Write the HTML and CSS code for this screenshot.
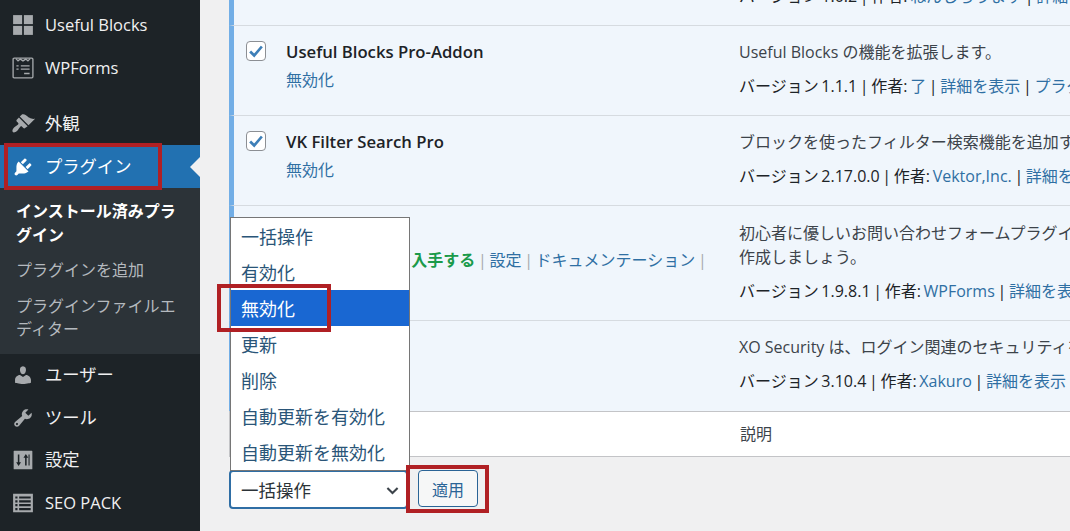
FILE: index.html
```html
<!DOCTYPE html>
<html lang="ja">
<head>
    <meta charset="UTF-8">
    <title>プラグイン</title>
    <link rel="stylesheet" href="styles.css">
</head>
<body>
<div class="page">
    <nav class="sidebar">
        <a class="menu-item">
            <svg class="menu-icon" viewBox="0 0 20 20"><rect x="1" y="1" width="8.2" height="8.2"/><rect x="10.8" y="1" width="8.2" height="8.2"/><rect x="1" y="10.8" width="8.2" height="8.2"/><rect x="10.8" y="10.8" width="8.2" height="8.2"/></svg>
            Useful Blocks
        </a>
        <a class="menu-item">
            <svg class="menu-icon" viewBox="0 0 20 20"><path class="outline" d="M2 1h16q1 0 1 1v16q0 1-1 1H2q-1 0-1-1V2q0-1 1-1z"/><path class="outline" d="M3.500 1.500l2 2 2-1.600 2.500 1.600 2.500-1.600 2 1.600 2-2"/><path class="outline" d="M4 8h2M8 8h8M4 11h2M8 11h8M11 15h5"/></svg>
            WPForms
        </a>
        <div class="menu-sep"></div>
        <a class="menu-item ja">
            <svg class="menu-icon brush" viewBox="0 0 20 20"><path d="M14.48 11.06L7.41 3.99l1.5-1.5c.5-.56 2.3-.47 3.51.32 1.21.8 1.43 1.28 2.91 2.1 1.18.64 2.45 1.26 4.45.85zM13.77 11.77L6.7 4.7 4.93 6.47c-.39.39-.39 1.02 0 1.41l1.06 1.06c.39.39.39 1.03 0 1.42-.6.6-1.43 1.11-2.21 1.69-.35.26-.7.53-1.01.84-1.34 1.34-1.7 2.9-1.05 3.6.65.65 2.25.28 3.58-1.05.31-.31.58-.66.84-1.01.58-.78 1.09-1.61 1.69-2.21.39-.39 1.03-.39 1.42 0l1.06 1.06c.39.39 1.02.39 1.41 0z"/></svg>
            外観
        </a>
        <a class="menu-item ja active">
            <svg class="menu-icon" viewBox="0 0 20 20"><path d="M13.11 4.36L9.87 7.6 8 5.73l3.24-3.24c.35-.34 1.05-.2 1.56.32.52.51.66 1.21.31 1.55zm-8 1.77l.91-1.12 9.01 9.01-1.19.84c-.71.71-2.63 1.16-3.82 1.16H6.14L4.9 17.26c-.59.59-1.54.59-2.12 0-.59-.58-.59-1.53 0-2.12l1.24-1.24v-3.88c0-1.13.4-3.19 1.09-3.89zm7.26 3.97l3.24-3.24c.34-.35 1.04-.21 1.55.31.52.51.66 1.21.31 1.55l-3.24 3.25z"/></svg>
            プラグイン
        </a>
        <div class="submenu">
            <a class="sub-item current">インストール済みプラグイン</a>
            <a class="sub-item">プラグインを追加</a>
            <a class="sub-item">プラグインファイルエディター</a>
        </div>
        <a class="menu-item ja">
            <svg class="menu-icon" viewBox="0 0 20 20"><path d="M10 9.25c-2.27 0-2.73-3.44-2.73-3.44C7 4.02 7.82 2 9.97 2c2.16 0 2.98 2.02 2.71 3.81 0 0-.41 3.44-2.68 3.44zm0 2.57L12.72 10c2.39 0 4.52 2.33 4.52 4.53v2.49s-3.65 1.13-7.24 1.13c-3.65 0-7.24-1.13-7.24-1.13v-2.49c0-2.25 1.94-4.48 4.47-4.48z"/></svg>
            ユーザー
        </a>
        <a class="menu-item ja">
            <svg class="menu-icon" viewBox="0 0 20 20"><path d="M16.68 9.77c-1.34 1.34-3.3 1.67-4.95.99l-5.41 6.52c-.99.99-2.59.99-3.58 0s-.99-2.59 0-3.57l6.52-5.42c-.68-1.65-.35-3.61.99-4.95 1.28-1.28 3.12-1.62 4.72-1.06l-2.89 2.89 2.82 2.82 2.86-2.87c.53 1.58.18 3.39-1.08 4.65zM3.81 16.21c.4.39 1.04.39 1.43 0 .4-.4.4-1.04 0-1.43-.39-.4-1.03-.4-1.43 0-.39.39-.39 1.03 0 1.43z"/></svg>
            ツール
        </a>
        <a class="menu-item ja">
            <svg class="menu-icon" viewBox="0 0 20 20"><path fill-rule="evenodd" d="M2 1.500h16q.5 0 .5.5v16q0 .5-.5.500H2q-.5 0-.5-.5V2q0-.5.5-.5zM5.300 5v7H3.800l2.200 3.500L8.200 12H6.700V5zM13.300 15v-7h1.500L12.600 4.500 10.400 8h1.500v7zM16 5h-1v10h1z"/></svg>
            設定
        </a>
        <a class="menu-item">
            <svg class="menu-icon" viewBox="0 0 20 20"><path fill-rule="evenodd" d="M1 1.500h18v17H1zM3 4v2h2V4zM6.500 4v2H17V4zM3 7.500v2h2v-2zM6.500 7.500v2H17v-2zM3 11v2h2v-2zM6.500 11v2H17v-2zM3 14.500v2h2v-2zM6.500 14.500v2H17v-2z"/></svg>
            SEO PACK
        </a>
    </nav>

    <main class="content">
        <div class="plugin-table">
            <div class="plugin-row">
                <div class="check-col"><span class="check"><svg viewBox="0 0 20 20"><path d="M3.500 10.500l4.500 4.500 8.500-10"/></svg></span></div>
                <div class="name-col"><div class="plugin-name">Useful Blocks</div><div class="actions"><a>無効化</a></div></div>
                <div class="desc-col"><p>Useful Blocks のブロックを追加します。</p><p class="meta">バージョン 1.0.2 | 作者: <a>ねんじろうます</a> | <a>詳細を表示</a></p></div>
            </div>
            <div class="plugin-row">
                <div class="check-col"><span class="check"><svg viewBox="0 0 20 20"><path d="M3.500 10.500l4.500 4.500 8.500-10"/></svg></span></div>
                <div class="name-col"><div class="plugin-name">Useful Blocks Pro-Addon</div><div class="actions"><a>無効化</a></div></div>
                <div class="desc-col"><p>Useful Blocks の機能を拡張します。</p><p class="meta">バージョン 1.1.1 | 作者: <a>了</a> | <a>詳細を表示</a> | <a>プラグインのサイトへ</a></p></div>
            </div>
            <div class="plugin-row">
                <div class="check-col"><span class="check"><svg viewBox="0 0 20 20"><path d="M3.500 10.500l4.500 4.500 8.500-10"/></svg></span></div>
                <div class="name-col"><div class="plugin-name">VK Filter Search Pro</div><div class="actions"><a>無効化</a></div></div>
                <div class="desc-col"><p>ブロックを使ったフィルター検索機能を追加するプラグインです。</p><p class="meta">バージョン 2.17.0.0 | 作者: <a>Vektor,Inc.</a> | <a>詳細を表示</a></p></div>
            </div>
            <div class="plugin-row row-two-lines">
                <div class="check-col"><span class="check"><svg viewBox="0 0 20 20"><path d="M3.500 10.500l4.500 4.500 8.500-10"/></svg></span></div>
                <div class="name-col"><div class="plugin-name">WPForms Lite</div><div class="actions"><a>無効化</a> <i>|</i> <a class="upgrade">Pro版を入手する</a> <i>|</i> <a>設定</a> <i>|</i> <a>ドキュメンテーション</a> <i>|</i></div></div>
                <div class="desc-col"><p>初心者に優しいお問い合わせフォームプラグインです。<br>作成しましょう。</p><p class="meta">バージョン 1.9.8.1 | 作者: <a>WPForms</a> | <a>詳細を表示</a></p></div>
            </div>
            <div class="plugin-row row-last">
                <div class="check-col"><span class="check"><svg viewBox="0 0 20 20"><path d="M3.500 10.500l4.500 4.500 8.500-10"/></svg></span></div>
                <div class="name-col"><div class="plugin-name">XO Security</div><div class="actions"><a>無効化</a></div></div>
                <div class="desc-col"><p>XO Security は、ログイン関連のセキュリティを強化します。</p><p class="meta">バージョン 3.10.4 | 作者: <a>Xakuro</a> | <a>詳細を表示</a></p></div>
            </div>
            <div class="table-foot">
                <div class="foot-name">プラグイン</div>
                <div class="foot-desc">説明</div>
            </div>
        </div>

        <div class="tablenav">
            <div class="bulk-select">
                <ul class="bulk-list">
                    <li>一括操作</li>
                    <li>有効化</li>
                    <li class="selected">無効化</li>
                    <li>更新</li>
                    <li>削除</li>
                    <li>自動更新を有効化</li>
                    <li>自動更新を無効化</li>
                </ul>
                一括操作
                <svg class="chevron" viewBox="0 0 20 20"><path d="M4 7l6 6 6-6"/></svg>
            </div>
            <button class="apply">適用</button>
        </div>
    </main>

    <!-- red marks drawn over the screenshot -->
    <div class="mark mark-plugins"></div>
    <div class="mark mark-disable"></div>
    <div class="mark mark-apply"></div>
</div>
</body>
</html>
```

FILE: styles.css
```css
html, body {
    margin: 0;
    height: 100%;
    overflow: hidden;
}

body {
    background-color: #f0f0f1;
    color: #3c434a;
    font-family: "Open Sans", "Noto Sans CJK JP", sans-serif;
    font-size: 16px;
    line-height: 24px;
}

.page {
    position: relative;
    display: flex;
    width: 1070px;
    height: 531px;
    overflow: hidden;
}

/* Sidebar */
.sidebar {
    flex: 0 0 200px;
    padding-top: 4px;
    background-color: #1d2327;
    color: #f0f0f1;
    box-sizing: border-box;
}

.menu-item {
    position: relative;
    display: flex;
    align-items: center;
    gap: 11px;
    height: 42.6px;
    padding-left: 12px;
    font-size: 16.5px;
}

.menu-item.ja {
    font-size: 17.3px;
}

.menu-icon {
    flex: 0 0 22px;
    width: 22px;
    height: 22px;
    fill: #a7aaad;
}

.menu-icon.brush {
    transform: scale(1.12);
}

.menu-icon .outline {
    fill: none;
    stroke: #a7aaad;
    stroke-width: 1.2;
}

.menu-sep {
    height: 13.5px;
}

.menu-item.active {
    background-color: #2271b1;
    color: #fff;
}

.menu-item.active .menu-icon {
    fill: #fff;
}

.menu-item.active::after {
    content: "";
    position: absolute;
    right: 0;
    top: 50%;
    margin-top: -10px;
    border: 10px solid transparent;
    border-left-width: 0;
    border-right-color: #f0f0f1;
}

.submenu {
    padding: 12.5px 20px 12px 16px;
    background-color: #2c3338;
    color: #b4b9be;
    line-height: 23.5px;
}

.sub-item {
    display: block;
    margin-bottom: 12px;
}

.sub-item:last-child {
    margin-bottom: 0;
}

.sub-item.current {
    color: #fff;
    font-weight: 700;
}

/* Plugin table */
.content {
    flex: 1;
    min-width: 0;
    padding-left: 29px;
}

.plugin-table {
    width: 900px;
    margin-top: -64px;
}

.plugin-row {
    display: flex;
    box-sizing: border-box;
    padding: 14px 0 17px;
    border-left: 5px solid #72aee6;
    border-bottom: 1px solid #d6dbe0;
    background-color: #f0f6fc;
}

.row-two-lines .desc-col {
    margin-top: 1px;
}

.row-last {
    padding-bottom: 18px;
}

.check-col {
    flex: 0 0 52px;
}

.check {
    display: block;
    box-sizing: border-box;
    width: 20px;
    height: 20px;
    margin: 1px 0 0 12px;
    border: 1px solid #8c8f94;
    border-radius: 4px;
    background-color: #fff;
}

.check svg {
    display: block;
    width: 18px;
    height: 18px;
    fill: none;
    stroke: #3d7fb8;
    stroke-width: 3;
}

.name-col {
    flex: 0 0 453px;
}

.plugin-name {
    color: #1d2327;
    font-size: 16.7px;
    font-weight: 600;
}

.actions {
    margin-top: 4px;
    color: #a7aaad;
    white-space: nowrap;
    word-spacing: -1.5px;
}

.actions i {
    font-style: normal;
}

a {
    color: #2f6fa3;
}

.sidebar a {
    color: inherit;
}

.upgrade {
    margin-left: 4px;
    color: #1a9a4a;
    font-weight: 700;
}

.desc-col {
    white-space: nowrap;
}

.desc-col p {
    margin: 0;
}

.desc-col .meta {
    margin-top: 10px;
    color: #1d2327;
    word-spacing: -1.5px;
}

.table-foot {
    display: flex;
    box-sizing: border-box;
    height: 46px;
    align-items: center;
    border-left: 1px solid #c3c4c7;
    border-top: 1px solid #c3c4c7;
    border-bottom: 1px solid #c3c4c7;
    margin-top: -1px;
    background-color: #fff;
}

.foot-name {
    flex: 0 0 509px;
    padding-left: 47px;
    box-sizing: border-box;
}

.foot-desc {
    margin-left: 1px;
}

/* Bulk actions */
.tablenav {
    display: flex;
    align-items: flex-start;
    gap: 10px;
    margin-top: 13px;
}

.bulk-select {
    position: relative;
    display: flex;
    align-items: center;
    box-sizing: border-box;
    width: 179px;
    height: 39px;
    padding-left: 10px;
    border: 2px solid #2f6ea5;
    border-radius: 4px;
    background-color: #fff;
    color: #2c3338;
    font-size: 17.5px;
}

.chevron {
    position: absolute;
    right: 5px;
    top: 10px;
    width: 17px;
    height: 17px;
    fill: none;
    stroke: #3c434a;
    stroke-width: 2.4;
}

.bulk-list {
    position: absolute;
    left: -1px;
    bottom: 36px;
    width: 180px;
    box-sizing: border-box;
    margin: 0;
    padding: 0;
    border: 1px solid #767676;
    list-style: none;
    background-color: #fff;
    color: #2a5578;
    font-size: 18px;
}

.bulk-list li {
    height: 36px;
    line-height: 38px;
    padding-left: 10px;
}

.bulk-list .selected {
    background-color: #1967d2;
    color: #fff;
}

.apply {
    width: 60px;
    height: 37px;
    padding: 0;
    border: 1px solid #2a6496;
    border-radius: 4px;
    background-color: #f6f7f7;
    color: #2a6496;
    font-family: inherit;
    font-size: 16px;
}

/* Red marks */
.mark {
    position: absolute;
    box-sizing: border-box;
    border: 4px solid #b02024;
}

.mark-plugins {
    left: 4px;
    top: 143px;
    width: 158px;
    height: 47px;
}

.mark-disable {
    left: 217px;
    top: 284px;
    width: 114px;
    height: 48px;
}

.mark-apply {
    left: 406px;
    top: 465px;
    width: 83px;
    height: 48px;
}
```
